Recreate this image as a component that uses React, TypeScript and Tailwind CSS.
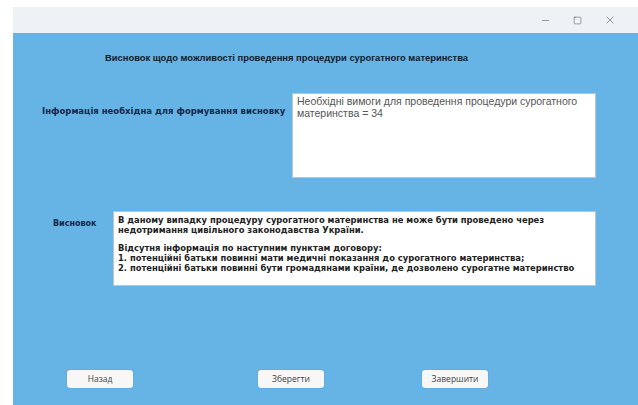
import { Minus, Square, X } from 'lucide-react';

const labelFont = { fontFamily: '"DejaVu Sans", Verdana, sans-serif' };

// Bottom action button
const ActionButton = ({ text }: { text: string }) => (
  <button className="w-[66px] h-[18px] bg-[#f7f7f7] rounded-[3px] text-[8.5px] text-[#444] shadow-[0_0_1px_rgba(0,0,0,0.3)] font-['Open_Sans',sans-serif]">
    {text}
  </button>
);

export default function App() {
  return (
    <div className="w-[638px] h-[405px] bg-white pl-[13px] pt-[7px] flex flex-col overflow-hidden">
      {/* Window title bar */}
      <div className="h-[26px] bg-[#eef2f7] flex items-center justify-end pr-[22px] gap-[22px] text-[#555]">
        <Minus size={11} strokeWidth={1.2} />
        <Square size={9} strokeWidth={1.4} />
        <X size={12} strokeWidth={1.2} />
      </div>

      <div className="flex-1 bg-[#66b3e6] flex flex-col">
        {/* Heading */}
        <h1 className="pl-[92px] pt-[18px] text-[9.4px] font-bold text-[#0f1c2b] font-['Liberation_Sans',sans-serif]">
          Висновок щодо можливості проведення процедури сурогатного материнства
        </h1>

        {/* Input information */}
        <div className="flex items-start pl-[29px] mt-[28px]">
          <p className="text-[8.5px] font-bold text-[#13284a] pt-[12px] w-[250px]" style={labelFont}>
            Інформація необхідна для формування висновку
          </p>
          <div className="w-[304px] h-[85px] bg-white border border-[#b9c6d2] px-[4px] pt-[1px] text-[10.5px] leading-[12px] text-[#555] font-['Liberation_Sans',sans-serif]">
            <p>Необхідні вимоги для проведення процедури сурогатного</p>
            <p>материнства = 34</p>
          </div>
        </div>

        {/* Conclusion */}
        <div className="flex items-start pl-[40px] mt-[33px]">
          <p className="text-[8px] font-bold text-[#13284a] pt-[7px] w-[60px]" style={labelFont}>
            Висновок
          </p>
          <div
            className="w-[483px] h-[75px] bg-white border border-[#b9c6d2] px-[4px] pt-[3px] text-[8.4px] leading-[10px] font-bold text-[#222]"
            style={labelFont}
          >
            <p>В даному випадку процедуру сурогатного материнства не може бути проведено через</p>
            <p>недотримання цивільного законодавства України.</p>
            <p className="mt-[8px]">Відсутня інформація по наступним пунктам договору:</p>
            <p>1. потенційні батьки повинні мати медичні показання до сурогатного материнства;</p>
            <p>2. потенційні батьки повинні бути громадянами країни, де дозволено сурогатне материнство</p>
          </div>
        </div>

        {/* Actions */}
        <div className="flex pl-[54px] mt-[84px] gap-[125px]">
          <ActionButton text="Назад" />
          <div className="flex gap-[98px]">
            <ActionButton text="Зберегти" />
            <ActionButton text="Завершити" />
          </div>
        </div>
      </div>
    </div>
  );
}
